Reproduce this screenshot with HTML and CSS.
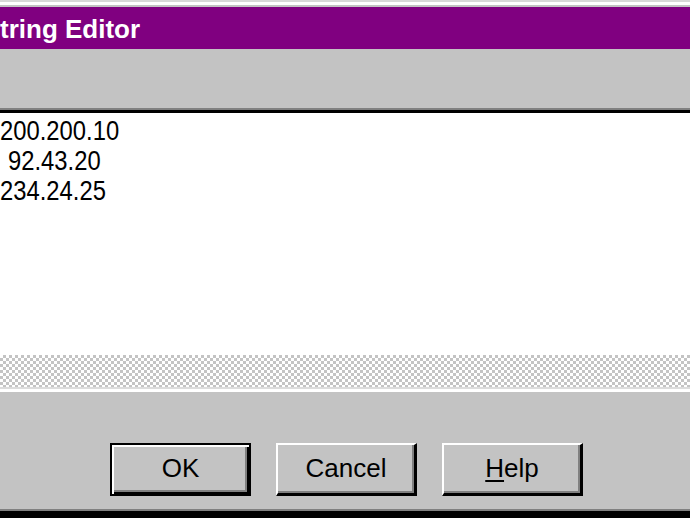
FILE: index.html
```html
<!DOCTYPE html>
<html lang="en">
<head>
    <meta charset="UTF-8">
    <title>String Editor</title>
    <link rel="stylesheet" href="styles.css">
</head>
<body>
    <div class="window">
        <!-- Title bar -->
        <div class="titlebar">tring Editor</div>

        <div class="panel"></div>

        <!-- String list -->
        <div class="listbox">
            <div class="listbox-inner">
                <ul class="items">
                    <li>200.200.10</li>
                    <li class="indent">92.43.20</li>
                    <li>234.24.25</li>
                </ul>
                <div class="hscroll"></div>
            </div>
        </div>

        <!-- Dialog buttons -->
        <div class="buttons">
            <button class="btn default">OK</button>
            <button class="btn">Cancel</button>
            <button class="btn"><u>H</u>elp</button>
        </div>
        <div class="frame-bottom"></div>
    </div>
</body>
</html>
```

FILE: styles.css
```css
html, body {
    margin: 0;
    padding: 0;
    height: 100%;
}
body {
    background: #c3c3c3;
    overflow: hidden;
    font-family: "Liberation Sans", Arial, sans-serif;
    color: #000;
}
.window {
    border-top: 2px solid #d8d8d8;
    box-shadow: inset 0 3px #fff;
    padding-top: 5px;
}
.titlebar {
    height: 42px;
    box-sizing: border-box;
    padding-top: 2px;
    line-height: 40px;
    background: #800080;
    color: #fff;
    font-weight: bold;
    font-size: 26px;
    white-space: nowrap;
}
.panel {
    height: 59px;
}

/* sunken list box */
.listbox {
    border-top: 2px solid #808080;
    border-bottom: 3px solid #fff;
}
.listbox-inner {
    border-top: 3px solid #000;
    border-bottom: 2px solid #dcdcdc;
}
.items {
    height: 242px;
    box-sizing: border-box;
    margin: 0;
    padding: 3px 0 0;
    list-style: none;
    background: #fff;
    font-size: 28px;
    line-height: 30px;
}
.items li {
    transform: scaleX(0.85);
    transform-origin: left center;
    white-space: nowrap;
}
.items li.indent {
    margin-left: 8px;
}
.hscroll {
    height: 32px;
    background-color: #fff;
    background-image: conic-gradient(#c4c4c4 25%, #fff 0 50%, #c4c4c4 0 75%, #fff 0);
    background-size: 6px 6px;
}

/* buttons */
.buttons {
    height: 119px;
    box-sizing: border-box;
    padding: 51px 0 0 110px;
    display: flex;
    gap: 25px;
    border-bottom: 2px solid #808080;
}
.btn {
    width: 141px;
    height: 53px;
    box-sizing: border-box;
    padding: 0 0 2px;
    background: #c3c3c3;
    border-style: solid;
    border-width: 2px 3px 3px 2px;
    border-color: #fff #000 #000 #fff;
    box-shadow: inset -2px -2px #808080;
    font-family: "Liberation Sans", Arial, sans-serif;
    font-size: 26px;
    color: #000;
    cursor: pointer;
}
.btn.default {
    border: 2px solid #000;
    box-shadow: inset 2px 2px #fff, inset -2px -2px #000, inset -4px -4px #808080;
}
.btn u {
    text-decoration-thickness: 2px;
    text-underline-offset: 3px;
}
.frame-bottom {
    height: 10px;
    background: #000;
}
```
